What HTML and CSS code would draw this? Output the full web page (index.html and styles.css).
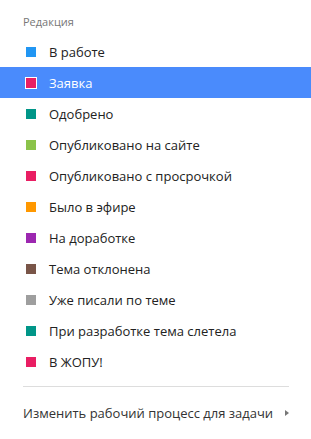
FILE: index.html
```html
<!DOCTYPE html>
<html lang="ru">
<head>
<meta charset="utf-8">
<link rel="stylesheet" href="styles.css">
</head>
<body>
<div class="menu">
  <div class="menu-header">Редакция</div>
  <ul class="status-list">
    <li class="status"><span class="swatch c-blue"></span>В работе</li>
    <li class="status is-active"><span class="swatch c-pink"></span>Заявка</li>
    <li class="status"><span class="swatch c-teal"></span>Одобрено</li>
    <li class="status"><span class="swatch c-green"></span>Опубликовано на сайте</li>
    <li class="status"><span class="swatch c-pink"></span>Опубликовано с просрочкой</li>
    <li class="status"><span class="swatch c-orange"></span>Было в эфире</li>
    <li class="status"><span class="swatch c-purple"></span>На доработке</li>
    <li class="status"><span class="swatch c-brown"></span>Тема отклонена</li>
    <li class="status"><span class="swatch c-grey"></span>Уже писали по теме</li>
    <li class="status"><span class="swatch c-teal"></span>При разработке тема слетела</li>
    <li class="status"><span class="swatch c-pink"></span>В ЖОПУ!</li>
  </ul>
  <div class="divider"></div>
  <div class="submenu">
    <span>Изменить рабочий процесс для задачи</span>
    <span class="arrow"></span>
  </div>
</div>
</body>
</html>
```

FILE: styles.css
```css
html, body {
  margin: 0;
  padding: 0;
  background: #fff;
}
body {
  font-family: "Open Sans", "Noto Sans", sans-serif;
  color: #333;
  width: 311px;
  height: 439px;
  overflow: hidden;
}
.menu {
  display: flex;
  flex-direction: column;
}
.menu-header {
  padding: 14px 0 0 23px;
  height: 22px;
  line-height: 16px;
  font-size: 11px;
  color: #777;
}
.status-list {
  list-style: none;
  margin: 0;
  padding: 0;
}
.status {
  display: flex;
  align-items: center;
  height: 31px;
  padding-left: 26px;
  padding-top: 1px;
  box-sizing: border-box;
  font-size: 13px;
  color: #222;
}
.status.is-active {
  background: #4a8bfc;
  color: #fff;
}
.swatch {
  width: 10px;
  height: 10px;
  margin-right: 13px;
  margin-top: -1px;
  flex: none;
  box-sizing: border-box;
}
.is-active .swatch {
  width: 12px;
  height: 12px;
  margin-left: -1px;
  margin-right: 12px;
  border: 1px solid #fff;
}
.c-blue { background: #2196f3; }
.c-pink { background: #e91e63; }
.c-teal { background: #009688; }
.c-green { background: #8bc34a; }
.c-orange { background: #ff9800; }
.c-purple { background: #9c27b0; }
.c-brown { background: #795548; }
.c-grey { background: #9e9e9e; }
.divider {
  height: 1px;
  background: #ddd;
  margin: 9px 22px 0 23px;
}
.submenu {
  display: flex;
  align-items: center;
  justify-content: space-between;
  height: 30px;
  margin-top: 11px;
  padding: 0 22px 0 23px;
  font-size: 13px;
  color: #333;
}
.arrow {
  width: 0;
  height: 0;
  border-top: 3px solid transparent;
  border-bottom: 3px solid transparent;
  border-left: 4px solid #777;
}
```
